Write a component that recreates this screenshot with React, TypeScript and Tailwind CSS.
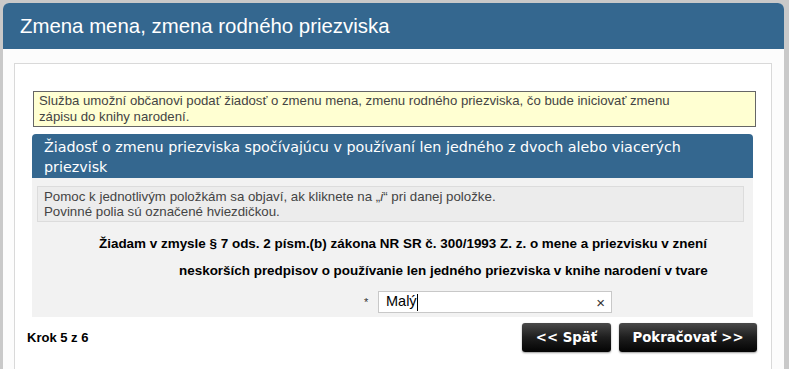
import React from 'react';

// Krok 5 formulára: zmena priezviska
const sans = "font-['Liberation_Sans',Arial,sans-serif]";
const verdana = "font-['DejaVu_Sans',Verdana,sans-serif]";

export default function App() {
  return (
    <div className={`w-[789px] h-[369px] overflow-hidden bg-[#c9c9c9] pl-[3px] pt-[3px] pr-[5px] ${sans}`}>
      <div className="h-full bg-[#fcfcfc] rounded-t-[6px]">
        {/* hlavička stránky */}
        <div className="h-[46px] bg-[#34678f] rounded-t-[6px] pl-[17px] flex items-center text-white text-[20.4px]">
          Zmena mena, zmena rodného priezviska
        </div>

        <div className="pl-[11px] pr-[12px] pt-[14px]">
          <div className="h-[400px] bg-white border border-[#d9d9d9] pt-[27px] pl-[18px] pr-[15px]">
            {/* popis služby */}
            <div className="border border-[#666] bg-[#ffffd2] px-[5px] pt-[1px] pb-[1px] text-[13.2px] leading-[16px] text-[#444]">
              Služba umožní občanovi podať žiadosť o zmenu mena, zmenu rodného priezviska, čo bude iniciovať zmenu
              <br />
              zápisu do knihy narodení.
            </div>

            <div className="mt-[7px] mr-[3px] -ml-[1px]">
              <div className={`bg-[#34678f] rounded-t-[4px] pl-[12px] pt-[3px] pb-[1px] text-white text-[14.3px] leading-[20px] ${verdana}`}>
                Žiadosť o zmenu priezviska spočívajúcu v používaní len jedného z dvoch alebo viacerých
                <br />
                priezvisk
              </div>

              <div className="bg-[#f2f2f2] pt-[8px] pb-[4px]">
                <div className="ml-[5px] mr-[9px] border border-[#dcdcdc] bg-[#ececec] px-[6px] py-[2px] text-[13.3px] leading-[15px] text-[#444]">
                  Pomoc k jednotlivým položkám sa objaví, ak kliknete na „<i>i</i>“ pri danej položke.
                  <br />
                  Povinné polia sú označené hviezdičkou.
                </div>

                <div className="mt-[8px] text-[13.45px] leading-[27px] font-bold text-black">
                  <div className="pl-[67px]">
                    Žiadam v zmysle § 7 ods. 2 písm.(b) zákona NR SR č. 300/1993 Z. z. o mene a priezvisku v znení
                  </div>
                  <div className="pl-[147px]">
                    neskorších predpisov o používanie len jedného priezviska v knihe narodení v tvare
                  </div>
                </div>

                <div className="mt-[7px] flex items-center pl-[332px]">
                  <span className="w-[14px] text-[11px] text-[#333]">*</span>
                  <div className="w-[234px] h-[22px] border border-[#c8c8c8] bg-white flex items-center pl-[7px] pr-[6px] text-[14.5px] text-black">
                    <span>Malý</span>
                    <span className="w-px h-[17px] bg-black" />
                    <span className="ml-auto text-[15px] text-[#333] leading-none">×</span>
                  </div>
                </div>
              </div>
            </div>

            {/* navigácia krokov */}
            <div className="-ml-[6px] mt-[6px] flex items-center">
              <span className="text-[13px] font-bold text-black">Krok 5 z 6</span>
              <div className={`ml-auto mr-[-1px] flex gap-[8px] ${verdana}`}>
                <button className="h-[29px] w-[89px] rounded-[3px] bg-gradient-to-b from-[#4a4a4a] via-[#1e1e1e] to-[#050505] text-white text-[13.3px] font-bold shadow-[0_1px_2px_rgba(0,0,0,0.4)]">
                  &lt;&lt; Späť
                </button>
                <button className="h-[29px] w-[138px] rounded-[3px] bg-gradient-to-b from-[#4a4a4a] via-[#1e1e1e] to-[#050505] text-white text-[13.3px] font-bold shadow-[0_1px_2px_rgba(0,0,0,0.4)]">
                  Pokračovať &gt;&gt;
                </button>
              </div>
            </div>
          </div>
        </div>
      </div>
    </div>
  );
}
